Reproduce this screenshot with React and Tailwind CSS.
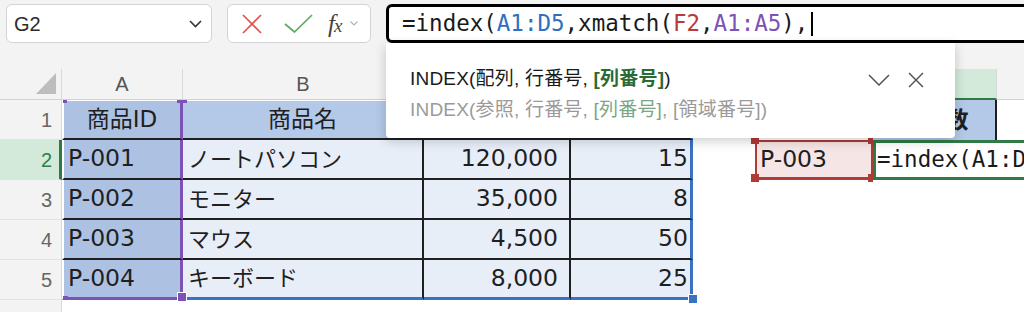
import React from "react";

const HEAD = "relative z-10 flex items-center justify-center bg-[#f3f3f3] border-r border-r-[#d9d9d9] border-b border-b-[#d2d2d2] text-[20px] text-[#555] font-['Liberation_Sans',sans-serif]";
const HEAD_G = "relative z-10 flex items-center justify-center bg-[#d3eadb] border-r border-r-[#d9d9d9] border-b-2 border-b-[#2f7a45] text-[20px] text-[#2e7d4a] font-['Liberation_Sans',sans-serif]";
const ROWH = "relative z-10 flex items-center justify-end pr-[9px] bg-[#f3f3f3] border-r border-r-[#d9d9d9] border-b border-b-[#e2e2e2] text-[20px] text-[#666] font-['Liberation_Sans',sans-serif]";
const ROWH_ACT = "relative z-10 flex items-center justify-end pr-[7px] bg-[#d3eadb] border-r-[3px] border-r-[#2f7a45] border-b border-b-[#e2e2e2] text-[20px] text-[#2e7d4a] font-['Liberation_Sans',sans-serif]";

const A_MID = "flex items-center pl-[4px] text-[23.5px] bg-[#adc2e3] border-l-2 border-l-white border-r-[3px] border-r-[#7c52b6] border-b-2 border-b-[#1f1f1f]";
const A_TOP = "flex items-center justify-center bg-[#adc2e3] border-t border-t-white border-l-2 border-l-white border-r-[3px] border-r-[#7c52b6] border-b-2 border-b-[#1f1f1f]";
const A_BOT = "flex items-center pl-[4px] text-[23.5px] bg-[#adc2e3] border-l-2 border-l-white border-r-[3px] border-r-[#7c52b6] border-b-[3px] border-b-[#7c52b6]";

const B_TOP = "flex items-center justify-center bg-[#b4c8e8] border-t border-t-white border-r-2 border-r-[#1f1f1f] border-b-2 border-b-[#1f1f1f]";
const B_MID = "flex items-center pl-[5px] text-[22px] bg-[#e8eef8] border-r-2 border-r-[#1f1f1f] border-b-2 border-b-[#1f1f1f]";
const B_BOT = "flex items-center pl-[5px] text-[22px] bg-[#e8eef8] border-r-2 border-r-[#1f1f1f] border-b-[3px] border-b-[#3a72c2]";

const C_TOP = "flex items-center justify-center bg-[#b4c8e8] border-t border-t-white border-r-2 border-r-[#1f1f1f] border-b-2 border-b-[#1f1f1f]";
const C_MID = "flex items-center justify-end pr-[11px] text-[23.5px] bg-[#e8eef8] border-r-2 border-r-[#1f1f1f] border-b-2 border-b-[#1f1f1f]";
const C_BOT = "flex items-center justify-end pr-[11px] text-[23.5px] bg-[#e8eef8] border-r-2 border-r-[#1f1f1f] border-b-[3px] border-b-[#3a72c2]";

const D_TOP = "flex items-center justify-center bg-[#b4c8e8] border-t border-t-white border-r-[3px] border-r-[#3a72c2] border-b-2 border-b-[#1f1f1f]";
const D_MID = "flex items-center justify-end pr-[2px] text-[23.5px] bg-[#e8eef8] border-r-[3px] border-r-[#3a72c2] border-b-2 border-b-[#1f1f1f]";
const D_BOT = "flex items-center justify-end pr-[2px] text-[23.5px] bg-[#e8eef8] border-r-[3px] border-r-[#3a72c2] border-b-[3px] border-b-[#3a72c2]";

const EMPTY = "bg-white";

const rows = [
  ["P-001", "ノートパソコン", "120,000", "15"],
  ["P-002", "モニター", "35,000", "8"],
  ["P-003", "マウス", "4,500", "50"],
  ["P-004", "キーボード", "8,000", "25"],
];

export default function App() {
  return (
    <div className="relative w-[1024px] h-[312px] overflow-hidden bg-white font-['Liberation_Sans','Noto_Sans_CJK_JP',sans-serif]">
      {/* Top formula bar */}
      <div className="h-[69px] bg-[#f3f3f3] flex items-start pt-[4px] pl-[6px] gap-[15px]">
        <div className="shrink-0 w-[206px] h-[39px] bg-white border border-[#d4d4d4] rounded-[6px] flex items-center justify-between pl-[7px] pr-[9px]">
          <span className="text-[20px] text-[#2b2b2b]">G2</span>
          <svg width="13" height="8" viewBox="0 0 13 8">
            <polyline points="1,1 6.5,6.5 12,1" fill="none" stroke="#333" strokeWidth="1.6" />
          </svg>
        </div>
        <div className="shrink-0 w-[144px] h-[39px] bg-white border border-[#d4d4d4] rounded-[6px] flex items-center pl-[14px]">
          <svg width="20" height="20" viewBox="0 0 20 20">
            <line x1="1" y1="1" x2="19" y2="19" stroke="#e5534b" strokeWidth="1.7" />
            <line x1="19" y1="1" x2="1" y2="19" stroke="#e5534b" strokeWidth="1.7" />
          </svg>
          <svg className="ml-[22px]" width="29" height="19" viewBox="0 0 29 19">
            <polyline points="1,10 10.5,18 28,1" fill="none" stroke="#5cac5c" strokeWidth="1.7" />
          </svg>
          <span className="ml-[15px] flex items-baseline text-[#444] font-['Liberation_Serif',serif] italic leading-none">
            <span className="text-[25px]">f</span>
            <span className="text-[19px] -ml-[1px]">x</span>
          </span>
          <svg className="ml-[8px]" width="8" height="5" viewBox="0 0 8 5">
            <polyline points="0.5,0.5 4,4 7.5,0.5" fill="none" stroke="#b0b0b0" strokeWidth="1.1" />
          </svg>
        </div>
        <div className="shrink-0 w-[700px] h-[39px] bg-white border-[3px] border-black rounded-[6px] flex items-center pl-[13px] whitespace-nowrap font-['DejaVu_Sans_Mono',monospace] text-[22.5px] text-[#1a1a1a]">
          <span>=index(</span>
          <span className="text-[#2f6fc2]">A1:D5</span>
          <span>,xmatch(</span>
          <span className="text-[#b83a3a]">F2</span>
          <span>,</span>
          <span className="text-[#7c52b6]">A1:A5</span>
          <span>),</span>
          <span className="inline-block w-[1.5px] h-[24px] bg-black ml-[3px]" />
        </div>
      </div>

      {/* Sheet grid */}
      <div className="w-[1200px] grid grid-cols-[62px_121px_241px_147px_122px_62px_118px_124px_1fr] grid-rows-[31px_40px_40px_40px_40px_40px_40px] font-['DejaVu_Sans','Noto_Sans_CJK_JP',sans-serif] text-[23px] text-[#1f1f1f]">
        {/* header row */}
        <div className="relative z-10 bg-[#f3f3f3] border-r border-r-[#d9d9d9] border-b border-b-[#d2d2d2] flex items-end justify-end pr-[5px] pb-[5px]">
          <svg width="20" height="21" viewBox="0 0 20 21">
            <polygon points="20,0 20,21 0,21" fill="#bdbdbd" />
          </svg>
        </div>
        <div className={HEAD}>A</div>
        <div className={HEAD}>B</div>
        <div className={HEAD}>C</div>
        <div className={HEAD}>D</div>
        <div className={HEAD}>E</div>
        <div className={HEAD}>F</div>
        <div className={HEAD_G}>G</div>
        <div className={HEAD} />

        {/* row 1 */}
        <div className={ROWH}>1</div>
        <div className={A_TOP}>商品ID</div>
        <div className={B_TOP}>商品名</div>
        <div className={C_TOP}>価格</div>
        <div className={D_TOP}>在庫数</div>
        <div className={EMPTY} />
        <div className={EMPTY} />
        <div className="flex items-center justify-center bg-[#b4c8e8] border-r-2 border-r-[#1f1f1f] font-bold">在庫数</div>
        <div className={EMPTY} />

        {/* row 2 */}
        <div className={ROWH_ACT}>2</div>
        <div className={A_MID}>{rows[0][0]}</div>
        <div className={B_MID}>{rows[0][1]}</div>
        <div className={C_MID}>{rows[0][2]}</div>
        <div className={D_MID}>{rows[0][3]}</div>
        <div className={EMPTY} />
        <div className="flex items-center pl-[3px] text-[23.5px] bg-[#f6e5e5] border-2 border-[#b03a36] border-b-[3px]">P-003</div>
        <div className="col-span-2 flex items-center pl-[1px] bg-white border-[3px] border-[#2f7a45] overflow-hidden whitespace-nowrap font-['DejaVu_Sans_Mono',monospace] text-[22.5px] text-[#1a1a1a]">
          =index(A1:D
        </div>

        {/* rows 3-4 */}
        {rows.slice(1, 3).map((r, i) => (
          <React.Fragment key={i}>
            <div className={ROWH}>{i + 3}</div>
            <div className={A_MID}>{r[0]}</div>
            <div className={B_MID}>{r[1]}</div>
            <div className={C_MID}>{r[2]}</div>
            <div className={D_MID}>{r[3]}</div>
            <div className={EMPTY} />
            <div className={EMPTY} />
            <div className={EMPTY} />
            <div className={EMPTY} />
          </React.Fragment>
        ))}

        {/* row 5 */}
        <div className={ROWH}>5</div>
        <div className={A_BOT}>{rows[3][0]}</div>
        <div className={B_BOT}>{rows[3][1]}</div>
        <div className={C_BOT}>{rows[3][2]}</div>
        <div className={D_BOT}>{rows[3][3]}</div>
        <div className={EMPTY} />
        <div className={EMPTY} />
        <div className={EMPTY} />
        <div className={EMPTY} />

        {/* row 6 */}
        <div className={ROWH} />
        <div className={EMPTY} />
        <div className={EMPTY} />
        <div className={EMPTY} />
        <div className={EMPTY} />
        <div className={EMPTY} />
        <div className={EMPTY} />
        <div className={EMPTY} />
        <div className={EMPTY} />
      </div>

      {/* range handles */}
      <div className="absolute z-20 left-[63px] top-[100px] w-[4px] h-[3px] bg-[#7c52b6]" />
      <div className="absolute z-20 left-[177px] top-[100px] w-[10px] h-[3px] bg-[#7c52b6]" />
      <div className="absolute z-20 left-[63px] top-[296px] w-[5px] h-[4px] bg-[#7c52b6]" />
      <div className="absolute z-20 left-[177px] top-[292px] w-[10px] h-[10px] bg-[#7c52b6] border border-white" />
      <div className="absolute z-20 left-[688px] top-[294px] w-[10px] h-[10px] bg-[#3a72c2] border border-white" />
      <div className="absolute z-20 left-[751px] top-[136px] w-[8px] h-[8px] bg-[#b03a36]" />
      <div className="absolute z-20 left-[868px] top-[136px] w-[5px] h-[8px] bg-[#b03a36]" />
      <div className="absolute z-20 left-[751px] top-[174px] w-[8px] h-[8px] bg-[#b03a36]" />
      <div className="absolute z-20 left-[868px] top-[174px] w-[5px] h-[8px] bg-[#b03a36]" />

      {/* function tooltip popup */}
      <div className="absolute z-30 left-[386px] top-[43px] w-[569px] h-[95px] bg-white rounded-b-[4px] shadow-[0_3px_12px_rgba(0,0,0,0.2)] pl-[24px] pr-[31px] pt-[22px] text-[19px] tracking-[0.2px] font-['Liberation_Sans','Noto_Sans_CJK_JP',sans-serif]">
        <div className="flex items-center justify-between h-[29px]">
          <div className="text-[#1a1a1a] whitespace-nowrap">
            <span>INDEX(配列,</span>
            <span> 行番号,</span>
            <span> </span>
            <span className="font-bold text-[#2a6b35]">[列番号]</span>
            <span>)</span>
          </div>
          <div className="flex items-center gap-[18px]">
            <svg width="22" height="12" viewBox="0 0 22 12">
              <polyline points="1,1 11,11 21,1" fill="none" stroke="#555" strokeWidth="1.5" />
            </svg>
            <svg width="16" height="16" viewBox="0 0 16 16">
              <line x1="1" y1="1" x2="15" y2="15" stroke="#555" strokeWidth="1.5" />
              <line x1="15" y1="1" x2="1" y2="15" stroke="#555" strokeWidth="1.5" />
            </svg>
          </div>
        </div>
        <div className="mt-[2px] h-[29px] flex items-center text-[#9a9a9a] whitespace-nowrap">
          <span>INDEX(参照,</span>
          <span className="whitespace-pre"> 行番号, </span>
          <span className="text-[#7aa585]">[列番号]</span>
          <span className="whitespace-pre">, [領域番号])</span>
        </div>
      </div>
    </div>
  );
}
